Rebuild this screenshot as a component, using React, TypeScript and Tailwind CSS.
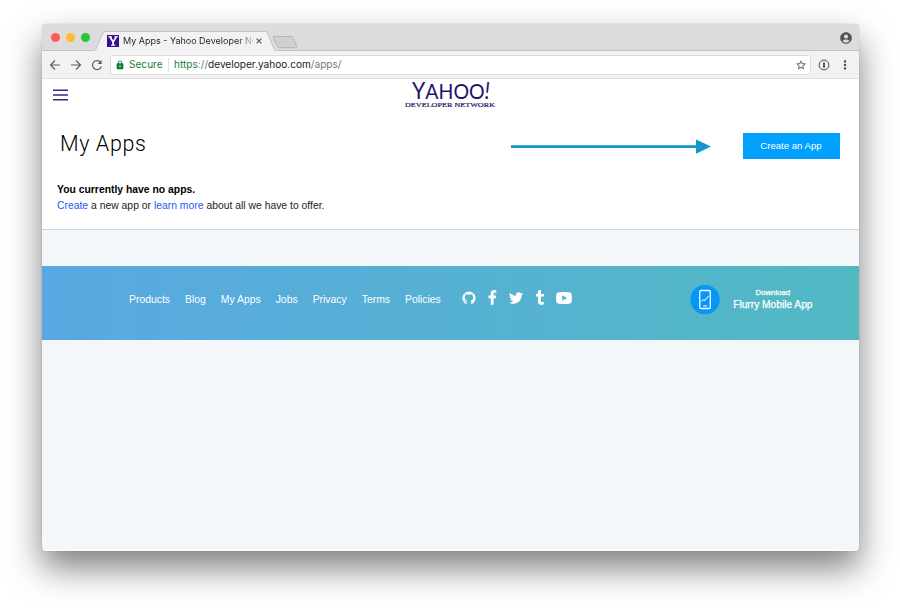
import React from "react";
import { FaTwitter } from "react-icons/fa";
import { MdAccountCircle, MdLock, MdMoreVert, MdStarBorder } from "react-icons/md";

const links = ["Products", "Blog", "My Apps", "Jobs", "Privacy", "Terms", "Policies"];

function TabStrip() {
  return (
    <div className="relative flex h-[27px] shrink-0 items-center bg-[#dcdcdc] pt-[2px]">
      <svg className="absolute left-0 top-0" width="817" height="28" viewBox="0 0 817 28">
        <path d="M0 26.5H51C53 26.5 53.6 26 54 25L61 9C61.6 7.7 62 7.5 63.5 7.5H223C224.5 7.5 225 7.8 225.5 9L232 25C232.5 26 233 26.5 234.5 26.5H817V28H0Z" fill="#f2f2f2" />
        <path d="M0 26.5H51C53 26.5 53.6 26 54 25L61 9C61.6 7.7 62 7.5 63.5 7.5H223C224.5 7.5 225 7.8 225.5 9L232 25C232.5 26 233 26.5 234.5 26.5H817" fill="none" stroke="#c2c2c2" strokeWidth="1" />
        <path d="M232 12.5H249C250 12.5 250.6 12.8 251 13.5L254.5 22C255 23 254.7 23.7 253.5 23.7H238C236.8 23.7 236 23.3 235.5 22.3L231.5 14C231 13 231.2 12.5 232 12.5Z" fill="#d0d0d0" stroke="#b2b2b2" strokeWidth="0.9" />
      </svg>
      <div className="relative flex w-[65px] items-center gap-[6px] pb-[2px] pl-[8.5px]">
        <i className="size-[9px] rounded-full bg-[#fc5b57]" />
        <i className="size-[9px] rounded-full bg-[#fdbc2f]" />
        <i className="size-[9px] rounded-full bg-[#23c83c]" />
      </div>
      <svg className="relative mt-[4px] shrink-0" width="12" height="12" viewBox="0 0 12 12">
        <rect width="12" height="12" fill="#3d0d9a" />
        <path d="M1.2 1.2H5V2.2H4.3L6.3 5.6L8.1 2.2H7.3V1.2H11V2.2H10L7.1 7V9.8H8.3V10.8H4V9.8H5.2V7L2.1 2.2H1.2Z" fill="#fff" />
      </svg>
      <div className="relative ml-[4px] mt-[5px] w-[130px] whitespace-nowrap bg-gradient-to-r from-[#222] from-88% to-[#2223] bg-clip-text font-['Inter',sans-serif] text-[9px] leading-[14px] text-transparent">My Apps - Yahoo Developer Ne</div>
      <svg className="relative ml-[3px] mt-[5px]" width="6" height="6" viewBox="0 0 6 6"><path d="M.6 .6L5.4 5.4M5.4 .6L.6 5.4" stroke="#555" strokeWidth="1.1" /></svg>
      <MdAccountCircle className="mb-[1px] ml-auto mr-[6px] text-[#545454]" size={14} />
    </div>
  );
}

function Toolbar() {
  return (
    <div className="flex h-[28px] shrink-0 items-center border-b border-[#dfdfdf] bg-[#f2f2f2] font-['Inter',sans-serif] text-[10.1px] text-[#5c5c5c]">
      <svg className="w-[68px] shrink-0" width="68" height="14" viewBox="0 0 68 14" fill="none" stroke="#5c5c5c" strokeWidth="1.15">
        <path d="M18 7H9M13 2.5L8.5 7L13 11.5" />
        <path d="M29 7H38M34 2.5L38.5 7L34 11.5" />
        <path d="M58.5 4.2A4.5 4.5 0 1 0 59.3 8.5" />
        <path d="M59.6 2V6H55.6Z" fill="#5c5c5c" stroke="none" />
      </svg>
      <div className="flex h-[20px] w-[701px] items-center rounded-[3px] border border-[#dcdcdc] bg-white">
        <MdLock className="ml-[4px] text-[#0b7d2b]" size={10} />
        <span className="ml-[4px] w-[39px] whitespace-nowrap text-[10.1px] text-[#188038]">Secure</span>
        <span className="h-[14px] border-l border-[#e2e2e2]" />
        <span className="ml-[5px] whitespace-nowrap text-[#777]"><span className="text-[#188038]">https</span>://<span className="text-[#222]">developer.yahoo.com</span>/apps/</span>
        <MdStarBorder className="ml-auto mr-[3px]" size={12} />
      </div>
      <svg className="ml-[7px]" width="12" height="12" viewBox="0 0 12 12" fill="none" stroke="#505050"><circle cx="6" cy="6" r="4.9" /><path d="M6 3.2V8.8" strokeWidth="1.8" /></svg>
      <MdMoreVert className="ml-[8px] text-[#444]" size={14} />
    </div>
  );
}

function Logo() {
  return (
    <svg className="mr-[12px] overflow-visible" width="94" height="30" viewBox="0 0 94 30" fill="#1d1466" fontFamily="Lato, sans-serif">
      <text x="9" y="20" fontSize="22" textLength="78" lengthAdjust="spacingAndGlyphs"><tspan fontSize="24">Y</tspan>AHOO<tspan fontSize="24" fontStyle="italic">!</tspan></text>
      <text x="2" y="27.7" fontSize="6.8" fontFamily="Liberation Serif, serif" stroke="#1d1466" strokeWidth="0.2" textLength="90" lengthAdjust="spacingAndGlyphs">DEVELOPER NETWORK</text>
    </svg>
  );
}

function PageContent() {
  return (
    <main className="h-[151px] shrink-0 border-b border-[#cfd3d6] bg-white">
      <div className="grid h-[33px] grid-cols-3 items-start pl-[11px]">
        <svg className="mt-[10px]" width="15" height="12" viewBox="0 0 15 12"><path d="M0 1.3H15M0 6H15M0 10.7H15" stroke="#43218c" strokeWidth="1.4" /></svg>
        <div className="flex justify-center"><Logo /></div>
      </div>
      <div className="flex h-[68px] items-center pl-[18px] pr-[19px]">
        <h1 className="whitespace-nowrap pb-[4px] font-['Roboto',sans-serif] text-[21.5px] font-light tracking-[0.6px] text-black">My Apps</h1>
        <svg className="ml-auto" width="200" height="16" viewBox="0 0 200 16"><path d="M0 8.6H187" stroke="#1296cb" strokeWidth="2.6" /><path d="M185 1.4L200 8.6L185 15.8Z" fill="#1296cb" /></svg>
        <button className="ml-[32px] h-[26px] w-[97px] bg-[#00a0ff] text-[9.6px] text-white">Create an App</button>
      </div>
      <div className="whitespace-nowrap pl-[15px] pt-[1.5px] text-[10.38px] leading-[16.5px] text-[#222]">
        <p className="font-bold text-black">You currently have no apps.</p>
        <p><a className="text-[#2658f5]">Create</a> a new app or <a className="text-[#2658f5]">learn more</a> about all we have to offer.</p>
      </div>
    </main>
  );
}

function Footer() {
  return (
    <footer className="mt-[36px] flex h-[74px] shrink-0 items-center bg-gradient-to-r from-[#59a8e2] to-[#52b9c3] pb-[7px] pl-[87px] text-white">
      <nav className="flex gap-[15px] whitespace-nowrap text-[10.4px]">{links.map((x) => <a key={x}>{x}</a>)}</nav>
      <div className="ml-[21px] flex items-center pb-[4px]">
        <svg width="14" height="14" viewBox="0 0 14 14">
          <path d="M4.8 13.3A6.6 6.6 0 1 1 9.2 13.3V10.8C9.2 10.1 9 9.7 8.7 9.5C10.3 9.3 11.2 8.6 11.2 6.5C11.2 5.8 11 5.2 10.5 4.7C10.7 4.1 10.6 3.5 10.4 3C9.8 3 9.2 3.3 8.6 3.7Q7 3.3 5.4 3.7C4.8 3.3 4.2 3 3.6 3C3.4 3.5 3.3 4.1 3.5 4.7C3 5.2 2.8 5.8 2.8 6.5C2.8 8.6 3.7 9.3 5.3 9.5C5 9.7 4.9 10 4.8 10.4C4 10.7 3.4 10.5 3 9.7C2.7 9.2 2.3 9.1 2 9.1C2.7 9.6 2.6 10.3 3.1 10.9C3.5 11.4 4.1 11.5 4.8 11.3Z" fill="#fff" />
        </svg>
        <svg className="ml-[12px]" width="9" height="15" viewBox="0 0 9 15"><path d="M8.3 .2V2.7H6.8C5.8 2.7 5.6 3.2 5.6 4V5.6H8.2L7.9 8.2H5.6V14.7H2.8V8.2H.5V5.6H2.8V3.6C2.8 1.4 4.2 0 6.3 0Z" fill="#fff" /></svg>
        <FaTwitter className="ml-[12px]" size={14} />
        <svg className="ml-[12px]" width="10" height="15" viewBox="0 0 10 15"><path d="M3.6 0H6V4H9V6.4H6V10.4C6 12 6.8 12.4 8.8 11.7V14.2C5.5 15.6 3 14.4 3 11.4V6.4H1V4.3C2.7 3.7 3.4 2.3 3.6 0Z" fill="#fff" /></svg>
        <svg className="ml-[11px]" width="16" height="12" viewBox="0 0 16 12"><path d="M3 .2Q8-.2 13 .2C15.2 .4 15.7 1.6 15.8 3.3Q16 6 15.8 8.7C15.7 10.4 15.2 11.6 13 11.8Q8 12.2 3 11.8C.8 11.6.3 10.4.2 8.7Q0 6 .2 3.3C.3 1.6.8 .4 3 .2ZM6.2 3.2V8.8L11 6Z" fill="#fff" fillRule="evenodd" /></svg>
      </div>
      <div className="ml-auto mr-[46px] flex items-center gap-[13px]">
        <svg width="30" height="30" viewBox="0 0 30 30" fill="none" stroke="#fff">
          <circle cx="15" cy="14.5" r="14.7" fill="#0696f5" stroke="none" />
          <rect x="9.8" y="5.5" width="10.5" height="18" rx="1.3" strokeWidth="1.3" />
          <path d="M11.5 16.5L13 14.7L15.2 15.5L15.9 13.5L17.4 13L18.5 10.8M13.2 20.9H17" />
        </svg>
        <div className="whitespace-nowrap text-center [-webkit-text-stroke:0.25px_white]">
          <div className="pb-[1px] text-[7.8px] leading-[10px]">Download</div>
          <div className="text-[10.2px] leading-[12px]">Flurry Mobile App</div>
        </div>
      </div>
    </footer>
  );
}

export default function App() {
  return (
    <div className="h-[610px] w-[900px] overflow-hidden bg-white pl-[42px] pt-[24px] font-['Liberation_Sans',Arial,sans-serif]">
      <div className="flex h-[527px] w-[816.5px] flex-col overflow-hidden rounded-[4px] border-b border-white bg-[#f3f7fa] shadow-[0_0_1px_rgba(0,0,0,0.4),0_17px_34px_rgba(0,0,0,0.5)]">
        <TabStrip /><Toolbar /><PageContent /><Footer />
      </div>
    </div>
  );
}
